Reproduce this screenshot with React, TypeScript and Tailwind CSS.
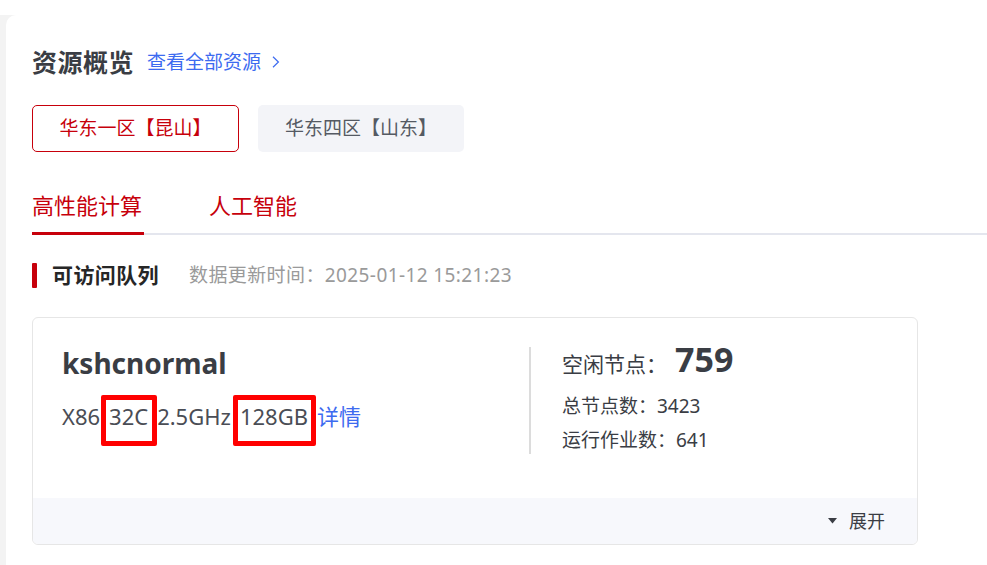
import React from "react";

const font = { fontFamily: '"Noto Sans", "Noto Sans CJK SC", sans-serif' };

export default function App() {
  return (
    <div className="w-[987px] h-[565px] overflow-hidden bg-white pt-[15px]" style={font}>
      <div className="flex h-full bg-[#f3f3f3]">
        <div className="w-[6px] shrink-0" />
        <div className="flex-1 bg-white rounded-tl-[10px] pl-[26px] pt-[34px]">
          {/* heading */}
          <div className="flex items-center h-[26px]">
            <span className="text-[25px] font-bold text-[#3a3d44] leading-none tracking-[0.5px]">资源概览</span>
            <span className="ml-[13px] text-[19px] text-[#3d6bf0] leading-none">查看全部资源</span>
            <svg className="ml-[11px]" width="8" height="12" viewBox="0 0 8 12" fill="none">
              <path d="M1 0.8 L6.4 6 L1 11.2" stroke="#3d6bf0" strokeWidth="1.2" />
            </svg>
          </div>
          {/* region buttons */}
          <div className="flex gap-[19px] mt-[30px]">
            <div className="w-[207px] h-[47px] rounded-[5px] border border-[#c7000b] flex items-center justify-center text-[19px] text-[#c7000b]">
              华东一区【昆山】
            </div>
            <div className="w-[206px] h-[47px] rounded-[5px] bg-[#f3f4f8] flex items-center justify-center text-[19px] text-[#555a63]">
              华东四区【山东】
            </div>
          </div>
          {/* tabs */}
          <div className="mt-[42px] flex items-start border-b-[2px] border-[#e4e6ee]">
            <div className="w-[112px] text-[22px] text-[#c7000b] border-b-[3px] border-[#c7000b] -mb-[2px] leading-none pb-[16px] whitespace-nowrap">高性能计算</div>
            <div className="ml-[65px] text-[22px] text-[#c7000b] leading-none whitespace-nowrap">人工智能</div>
          </div>
          {/* section title */}
          <div className="flex items-center mt-[28px] h-[25px]">
            <div className="w-[5px] h-[25px] bg-[#c7000b] rounded-[1px]" />
            <span className="ml-[15px] text-[21px] font-bold text-[#262626] leading-none tracking-[0.4px]">可访问队列</span>
            <span className="ml-[30px] text-[19px] text-[#9a9a9a] leading-none tracking-[0.4px]">数据更新时间：2025-01-12 15:21:23</span>
          </div>
          {/* card */}
          <div className="mt-[29px] w-[886px] h-[228px] rounded-[6px] border border-[#e6e6e6] flex flex-col overflow-hidden">
            <div className="flex-1 flex">
              <div className="w-[496px] pl-[29px] pt-[31px]">
                <div className="text-[28px] font-bold text-[#3a3d44] leading-none">kshcnormal</div>
                <div className="mt-[28px] flex items-baseline gap-[9px] text-[22px] text-[#4a4d55] leading-none whitespace-nowrap">
                  <span>X86</span>
                  <span className="relative">
                    32C
                    <span className="pointer-events-none absolute -left-[8px] -right-[9px] -top-[10px] -bottom-[19px] border-[5px] border-[#ff0000] rounded-[2px]" />
                  </span>
                  <span>2.5GHz</span>
                  <span className="relative">
                    128GB
                    <span className="pointer-events-none absolute -left-[7px] -right-[8px] -top-[10px] -bottom-[19px] border-[5px] border-[#ff0000] rounded-[2px]" />
                  </span>
                  <span className="text-[#3d6bf0]">详情</span>
                </div>
              </div>
              <div className="w-[2px] bg-[#dcdcdc] mt-[29px] h-[107px]" />
              <div className="pl-[31px] pt-[24px]">
                <div className="flex items-baseline">
                  <span className="text-[21px] text-[#3a3d44] leading-none">空闲节点：</span>
                  <span className="ml-[8px] text-[34px] font-bold text-[#3a3d44] leading-none">759</span>
                </div>
                <div className="mt-[21px] text-[19px] text-[#3a3d44] leading-none">总节点数：3423</div>
                <div className="mt-[15px] text-[19px] text-[#3a3d44] leading-none">运行作业数：641</div>
              </div>
            </div>
            <div className="h-[46px] bg-[#f7f8fc] flex items-center justify-end pr-[32px]">
              <svg width="9" height="6" viewBox="0 0 9 6"><path d="M0 0 L9 0 L4.5 5.5 Z" fill="#3a3d44" /></svg>
              <span className="ml-[12px] text-[18px] text-[#3a3d44] leading-none">展开</span>
            </div>
          </div>
        </div>
      </div>
    </div>
  );
}
